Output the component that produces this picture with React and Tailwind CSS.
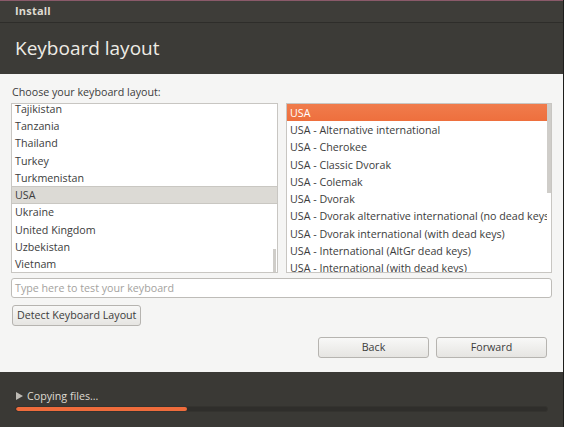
import React from 'react';

const countries = [
  'Tajikistan',
  'Tanzania',
  'Thailand',
  'Turkey',
  'Turkmenistan',
  'USA',
  'Ukraine',
  'United Kingdom',
  'Uzbekistan',
  'Vietnam',
];

const variants = [
  'USA',
  'USA - Alternative international',
  'USA - Cherokee',
  'USA - Classic Dvorak',
  'USA - Colemak',
  'USA - Dvorak',
  'USA - Dvorak alternative international (no dead keys)',
  'USA - Dvorak international (with dead keys)',
  'USA - International (AltGr dead keys)',
  'USA - International (with dead keys)',
];

const font = { fontFamily: '"Open Sans", "DejaVu Sans", sans-serif' };

const App = () => {
  return (
    <div
      className="w-[564px] h-[427px] flex flex-col bg-[#3c3b37] overflow-hidden border-r border-[#1e1e1c]"
      style={font}
    >
      {/* TITLE BAR */}
      <div className="h-[23px] shrink-0 border-t border-[#8a5a6a] border-b border-b-[#2e2d2a] bg-[#3e3d39] flex items-center pl-[15px]">
        <span className="text-[11px] font-bold text-[#dfdbd2] tracking-[0.2px]">Install</span>
      </div>

      {/* HEADER */}
      <div className="h-[51px] shrink-0 flex items-center pl-[15px] pb-[1px]">
        <h1 className="text-[19px] text-[#eeebe5] leading-none">Keyboard layout</h1>
      </div>

      {/* CONTENT */}
      <div className="h-[298px] shrink-0 bg-[#f5f5f4] px-[11px] pt-[11px] flex flex-col">
        <p className="text-[10.7px] text-[#3c3c3c] leading-[14px] pl-[1px]">Choose your keyboard layout:</p>

        <div className="mt-[4px] flex gap-[8px] h-[170px]">
          {/* COUNTRIES */}
          <div className="w-[267px] border border-[#c8c6c2] bg-white relative overflow-hidden">
            <div className="flex flex-col -mt-[4px]">
              {countries.map((c) => (
                <div
                  key={c}
                  className={`h-[17.3px] shrink-0 flex items-center pl-[3px] text-[10.7px] text-[#3c3c3c] ${
                    c === 'USA' ? 'bg-[#dcdad5] border-y border-[#c9c7c2]' : ''
                  }`}
                >
                  {c}
                </div>
              ))}
            </div>
            <div className="absolute right-[1px] bottom-0 w-[3px] h-[23px] bg-[#cfcdc9]" />
          </div>

          {/* VARIANTS */}
          <div className="w-[266px] border border-[#c8c6c2] bg-white flex overflow-hidden">
            <div className="flex-1 flex flex-col overflow-hidden">
              {variants.map((v, i) => (
                <div
                  key={v}
                  className={`h-[17.3px] shrink-0 flex items-center pl-[3px] text-[10.7px] whitespace-nowrap ${
                    i === 0
                      ? 'bg-gradient-to-b from-[#f07c4c] to-[#ee6f3d] text-white'
                      : 'text-[#3c3c3c]'
                  }`}
                >
                  {v}
                </div>
              ))}
            </div>
            <div className="w-[4px] shrink-0 flex flex-col">
              <div className="h-[89px] bg-[#cfcdc9]" />
            </div>
          </div>
        </div>

        <div className="mt-[5px] h-[20px] w-[541px] border border-[#bebcb8] rounded-[3px] bg-white flex items-center pl-[3px]">
          <span className="text-[10.7px] text-[#a4a29e]">Type here to test your keyboard</span>
        </div>

        <div className="mt-[3px] pl-[1px]">
          <button className="h-[21px] px-[4px] border border-[#b6b4b0] rounded-[3px] bg-gradient-to-b from-[#f8f8f7] to-[#e6e5e2] text-[10.7px] text-[#3c3c3c] leading-none">
            Detect Keyboard Layout
          </button>
        </div>

        <div className="mt-[11px] flex justify-end gap-[7px] pr-[5px]">
          <button className="w-[111px] h-[21px] border border-[#b6b4b0] rounded-[3px] bg-gradient-to-b from-[#f8f8f7] to-[#e6e5e2] text-[10.7px] text-[#3c3c3c] leading-none">
            Back
          </button>
          <button className="w-[111px] h-[21px] border border-[#b6b4b0] rounded-[3px] bg-gradient-to-b from-[#f8f8f7] to-[#e6e5e2] text-[10.7px] text-[#3c3c3c] leading-none">
            Forward
          </button>
        </div>
      </div>

      {/* FOOTER */}
      <div className="flex-1 bg-[#3a3935] px-[15px] pt-[17px]">
        <div className="flex items-center gap-[4px] pl-[1px]">
          <svg width="7" height="8" viewBox="0 0 7 8">
            <path d="M0 0 L7 4 L0 8 Z" fill="#bdbab4" />
          </svg>
          <span className="text-[10.7px] text-[#dfdbd2] leading-[14px]">Copying files...</span>
        </div>
        <div className="mt-[3px] h-[6px] w-[533px] rounded-full bg-[#2f2e2b] border border-[#34332f] overflow-hidden">
          <div className="h-full w-[171px] rounded-full bg-[#ef6c3c]" />
        </div>
      </div>
    </div>
  );
};

export default App;
